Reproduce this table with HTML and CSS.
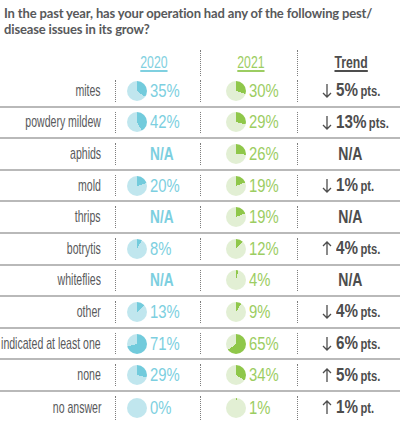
FILE: index.html
```html
<!DOCTYPE html>
<html lang="en">
<head>
<meta charset="utf-8">
<title>Pest / disease issues</title>
<link rel="stylesheet" href="styles.css">
</head>
<body>
<div class="page">
  <h1 class="title">In the past year, has your operation had any of the following pest/<br>disease issues in its grow?</h1>

  <div class="grid head">
    <div class="hcell"></div>
    <div class="hcell c20"><span class="htext">2020</span></div>
    <div class="hcell c21 dot"><span class="htext">2021</span></div>
    <div class="hcell ct dot"><span class="htext">Trend</span></div>
  </div>

  <div class="rows">
    <div class="grid row">
      <div class="label"><span>mites</span></div>
      <div class="cell y20 dot"><i class="pie" style="--p:35%"></i><span class="pct">35%</span></div>
      <div class="cell y21 dot"><i class="pie" style="--p:30%"></i><span class="pct">30%</span></div>
      <div class="cell trend dot"><svg class="arr" viewBox="0 0 10 15"><path d="M5 1V14M1 10L5 14L9 10"/></svg><span class="tv"><b class="num">5%</b><b class="unit">pts.</b></span></div>
    </div>
    <div class="grid row">
      <div class="label"><span>powdery mildew</span></div>
      <div class="cell y20 dot"><i class="pie" style="--p:42%"></i><span class="pct">42%</span></div>
      <div class="cell y21 dot"><i class="pie" style="--p:29%"></i><span class="pct">29%</span></div>
      <div class="cell trend dot"><svg class="arr" viewBox="0 0 10 15"><path d="M5 1V14M1 10L5 14L9 10"/></svg><span class="tv"><b class="num">13%</b><b class="unit">pts.</b></span></div>
    </div>
    <div class="grid row">
      <div class="label"><span>aphids</span></div>
      <div class="cell y20 dot"><i class="pie none"></i><span class="pct na">N/A</span></div>
      <div class="cell y21 dot"><i class="pie" style="--p:26%"></i><span class="pct">26%</span></div>
      <div class="cell trend center dot"><b class="tna">N/A</b></div>
    </div>
    <div class="grid row">
      <div class="label"><span>mold</span></div>
      <div class="cell y20 dot"><i class="pie" style="--p:20%"></i><span class="pct">20%</span></div>
      <div class="cell y21 dot"><i class="pie" style="--p:19%"></i><span class="pct">19%</span></div>
      <div class="cell trend dot"><svg class="arr" viewBox="0 0 10 15"><path d="M5 1V14M1 10L5 14L9 10"/></svg><span class="tv"><b class="num">1%</b><b class="unit">pt.</b></span></div>
    </div>
    <div class="grid row">
      <div class="label"><span>thrips</span></div>
      <div class="cell y20 dot"><i class="pie none"></i><span class="pct na">N/A</span></div>
      <div class="cell y21 dot"><i class="pie" style="--p:19%"></i><span class="pct">19%</span></div>
      <div class="cell trend center dot"><b class="tna">N/A</b></div>
    </div>
    <div class="grid row">
      <div class="label"><span>botrytis</span></div>
      <div class="cell y20 dot"><i class="pie" style="--p:8%"></i><span class="pct">8%</span></div>
      <div class="cell y21 dot"><i class="pie" style="--p:12%"></i><span class="pct">12%</span></div>
      <div class="cell trend dot"><svg class="arr" viewBox="0 0 10 15"><path d="M5 14V1M1 5L5 1L9 5"/></svg><span class="tv"><b class="num">4%</b><b class="unit">pts.</b></span></div>
    </div>
    <div class="grid row">
      <div class="label"><span>whiteflies</span></div>
      <div class="cell y20 dot"><i class="pie none"></i><span class="pct na">N/A</span></div>
      <div class="cell y21 dot"><i class="pie" style="--p:4%"></i><span class="pct">4%</span></div>
      <div class="cell trend center dot"><b class="tna">N/A</b></div>
    </div>
    <div class="grid row">
      <div class="label"><span>other</span></div>
      <div class="cell y20 dot"><i class="pie" style="--p:13%"></i><span class="pct">13%</span></div>
      <div class="cell y21 dot"><i class="pie" style="--p:9%"></i><span class="pct">9%</span></div>
      <div class="cell trend dot"><svg class="arr" viewBox="0 0 10 15"><path d="M5 1V14M1 10L5 14L9 10"/></svg><span class="tv"><b class="num">4%</b><b class="unit">pts.</b></span></div>
    </div>
    <div class="grid row">
      <div class="label"><span>indicated at least one</span></div>
      <div class="cell y20 dot"><i class="pie" style="--p:71%"></i><span class="pct">71%</span></div>
      <div class="cell y21 dot"><i class="pie" style="--p:65%"></i><span class="pct">65%</span></div>
      <div class="cell trend dot"><svg class="arr" viewBox="0 0 10 15"><path d="M5 1V14M1 10L5 14L9 10"/></svg><span class="tv"><b class="num">6%</b><b class="unit">pts.</b></span></div>
    </div>
    <div class="grid row">
      <div class="label"><span>none</span></div>
      <div class="cell y20 dot"><i class="pie" style="--p:29%"></i><span class="pct">29%</span></div>
      <div class="cell y21 dot"><i class="pie" style="--p:34%"></i><span class="pct">34%</span></div>
      <div class="cell trend dot"><svg class="arr" viewBox="0 0 10 15"><path d="M5 14V1M1 5L5 1L9 5"/></svg><span class="tv"><b class="num">5%</b><b class="unit">pts.</b></span></div>
    </div>
    <div class="grid row last">
      <div class="label"><span>no answer</span></div>
      <div class="cell y20 dot"><i class="pie" style="--p:0%"></i><span class="pct">0%</span></div>
      <div class="cell y21 dot"><i class="pie" style="--p:1%"></i><span class="pct">1%</span></div>
      <div class="cell trend dot"><svg class="arr" viewBox="0 0 10 15"><path d="M5 14V1M1 5L5 1L9 5"/></svg><span class="tv"><b class="num">1%</b><b class="unit">pt.</b></span></div>
    </div>
  </div>
</div>
</body>
</html>
```

FILE: styles.css
```css
* { box-sizing: border-box; }

html, body {
  margin: 0;
  padding: 0;
  background: #ffffff;
}

.page {
  width: 400px;
  font-family: "Liberation Sans", Arial, sans-serif;
  color: #555555;
}

.title {
  margin: 0;
  padding: 5px 4px 0 4px;
  font-family: Lato, "Liberation Sans", sans-serif;
  font-weight: 700;
  font-size: 13px;
  line-height: 16px;
  letter-spacing: -0.15px;
  color: #58595b;
  white-space: nowrap;
}

.grid {
  display: grid;
  grid-template-columns: 115px 85px 97px 103px;
}

/* header */
.head {
  margin-top: 13px;
  height: 26px;
}

.hcell {
  display: flex;
  justify-content: center;
  align-items: flex-start;
  padding-top: 5px;
}

.hcell.dot {
  border-left: 1px dotted #7d7d7d;
}

.htext {
  display: inline-block;
  font-size: 17px;
  line-height: 16px;
  text-decoration: underline;
  text-decoration-thickness: 2px;
  text-underline-offset: 2px;
  transform: scaleX(0.72);
}

.c20 .htext { color: #7fd0e0; margin-left: -8px; }
.c21 .htext { color: #9ccd62; margin-left: 4px; }
.ct .htext { color: #4d4d4d; font-weight: 700; margin-left: 5px; }

/* rows */
.row {
  height: 31.6px;
  border-bottom: 2px solid #b9b9b9;
}

.row.last {
  border-bottom: none;
}

.label {
  display: flex;
  justify-content: flex-end;
  align-items: center;
  padding-right: 14px;
  white-space: nowrap;
  font-size: 17px;
  color: #58595b;
}

.label span {
  display: inline-block;
  transform: scaleX(0.62);
  transform-origin: right center;
}

.cell {
  display: flex;
  align-items: center;
  margin: 4px 0 4px 0;
  white-space: nowrap;
}

.cell.dot {
  border-left: 1px dotted #7d7d7d;
}

.y20 { padding-left: 11px; }
.y21 { padding-left: 25px; }

.pie {
  display: block;
  flex: none;
  width: 20px;
  height: 20px;
  border-radius: 50%;
  margin-right: 3px;
}

.y20 .pie {
  background: conic-gradient(#72cbdc 0 var(--p), #c0e6ee var(--p) 100%);
}

.y21 .pie {
  background: conic-gradient(#8fc74a 0 var(--p), #e2efd4 var(--p) 100%);
}

.pie.none {
  background: none;
}

.pct {
  display: inline-block;
  font-size: 19px;
  line-height: 18px;
  transform: scaleX(0.78);
  transform-origin: left center;
}

.y20 .pct { color: #7ccfe0; }
.y21 .pct { color: #9ccd62; }

.pct.na {
  font-weight: 700;
  font-size: 18px;
  color: #7ccfe0;
  transform: scaleX(0.76);
}

.trend {
  padding-left: 24px;
  color: #4d4d4d;
}

.trend.center {
  justify-content: center;
  padding-left: 0;
}

.arr {
  flex: none;
  width: 10px;
  height: 15px;
  margin-right: 4px;
  fill: none;
  stroke: #4d4d4d;
  stroke-width: 1.3;
}

.tv {
  display: inline-block;
  white-space: nowrap;
  transform: scaleX(0.8);
  transform-origin: left center;
}

.num {
  font-size: 19px;
  line-height: 18px;
  font-weight: 700;
}

.unit {
  font-size: 14px;
  font-weight: 700;
  margin-left: 3px;
}

.tna {
  display: inline-block;
  font-size: 19px;
  line-height: 18px;
  font-weight: 700;
  transform: scaleX(0.74);
  margin-left: 2px;
}
```
